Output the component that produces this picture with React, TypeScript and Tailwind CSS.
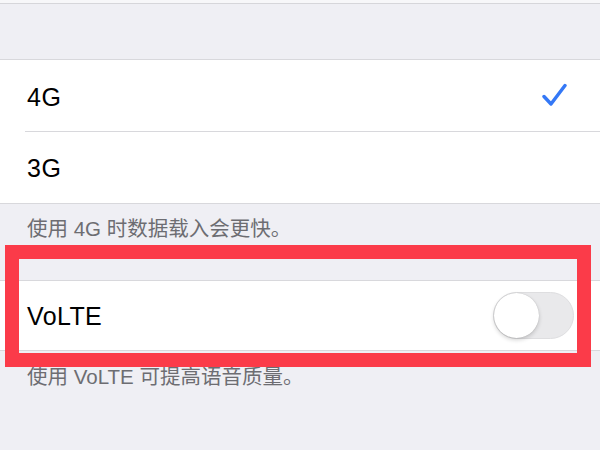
export default function App() {
  const font = { fontFamily: '"Liberation Sans", "Noto Sans CJK SC", sans-serif' };
  return (
    <div className="relative w-[600px] h-[450px] overflow-hidden bg-[#efeff4]" style={font}>
      {/* top strip */}
      <div className="h-[3px] bg-[#f7f7f9] border-b border-[#d6d6da] box-content" />
      <div className="h-[55px]" />

      {/* network options */}
      <div className="bg-white border-y border-[#d8d8dc]">
        <div className="flex items-center justify-between h-[71px] pl-[27px] pr-[33px]">
          <span className="text-[25px] tracking-[0.5px] text-black pt-[4px]">4G</span>
          <svg width="26" height="26" viewBox="0 0 26 26" className="mt-[-2px]">
            <path d="M3 14.5 L10 22 L24 3.5" fill="none" stroke="#3478f6" strokeWidth="3.4" strokeLinecap="round" strokeLinejoin="round" />
          </svg>
        </div>
        <div className="ml-[25px] h-px bg-[#d8d8dc]" />
        <div className="flex items-center h-[71px] pl-[27px]">
          <span className="text-[25px] tracking-[0.5px] text-black pt-[3px]">3G</span>
        </div>
      </div>

      <div className="h-[76px] pl-[27px] pt-[13px]">
        <p className="text-[20.5px] leading-[24px] text-[#6d6d72]">使用 4G 时数据载入会更快。</p>
      </div>

      {/* VoLTE */}
      <div className="bg-white border-y border-[#d8d8dc]">
        <div className="flex items-center justify-between h-[69px] pl-[27px] pr-[26px]">
          <span className="text-[25px] tracking-[0.4px] text-black pt-[3px]">VoLTE</span>
          <div className="relative w-[81px] h-[47px] rounded-full bg-[#e9e9eb] border border-[#dedee0]">
            <div className="absolute left-0 top-0 w-[45px] h-[45px] rounded-full bg-white shadow-[0_2px_4px_rgba(0,0,0,0.18),0_0_1px_rgba(0,0,0,0.2)]" />
          </div>
        </div>
      </div>

      <div className="pl-[27px] pt-[14px]">
        <p className="text-[20.5px] leading-[24px] text-[#6d6d72]">使用 VoLTE 可提高语音质量。</p>
      </div>

      {/* red highlight annotation */}
      <div className="absolute left-[5px] top-[245px] w-[586px] h-[122px] border-[14px] border-[#fb3b49]" />
    </div>
  );
}
